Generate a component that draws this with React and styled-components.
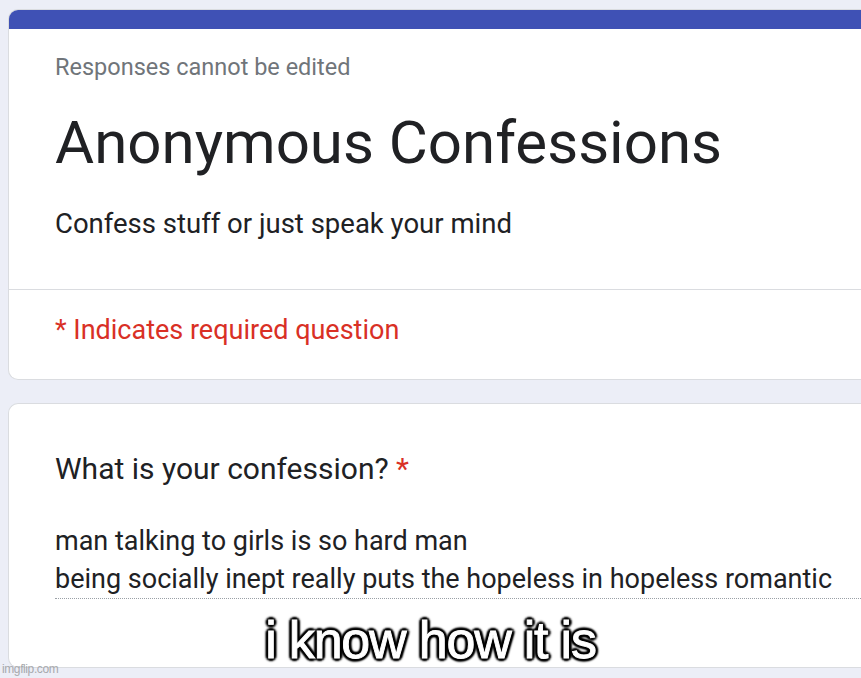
import styled, { createGlobalStyle } from "styled-components";

const Global = createGlobalStyle`
  html, body {
    margin: 0;
    padding: 0;
    background: #eceef7;
    overflow: hidden;
  }
  body {
    font-family: Roboto, "Liberation Sans", Arial, sans-serif;
  }
`;

const Page = styled.div`
  position: relative;
  width: 861px;
  height: 678px;
  overflow: hidden;
  padding: 9px 0 0 8px;
  box-sizing: border-box;
  display: flex;
  flex-direction: column;
  gap: 23px;
`;

const Card = styled.div`
  width: 880px;
  flex-shrink: 0;
  background: #fff;
  border: 1px solid #dadce0;
  border-right: none;
  border-radius: 10px 0 0 10px;
  box-sizing: border-box;
  overflow: hidden;
  height: ${({ $h }) => $h}px;
  display: flex;
  flex-direction: column;
`;

const TopBar = styled.div`
  height: 19px;
  background: #3f51b5;
  flex-shrink: 0;
`;

const Head = styled.div`
  padding: 24px 46px 0;
  height: 261px;
  flex-shrink: 0;
  box-sizing: border-box;
  border-bottom: 1px solid #dadce0;
`;

const Muted = styled.div`
  font-size: 23.5px;
  color: #70757a;
  line-height: 28px;
`;

const Title = styled.h1`
  margin: 27px 0 0;
  font-size: 60px;
  font-weight: 400;
  color: #202124;
  line-height: 70px;
  white-space: nowrap;
`;

const Desc = styled.div`
  margin-top: 30px;
  font-size: 27.5px;
  color: #202124;
  line-height: 32px;
`;

const Required = styled.div`
  padding: 24px 46px 0;
  font-size: 27px;
  color: #d93025;
  line-height: 32px;
`;

const Body = styled.div`
  padding: 47px 0 0 46px;
  width: 852px;
  box-sizing: border-box;
`;

const Question = styled.div`
  font-size: 30px;
  color: #202124;
  line-height: 36px;
`;

const Star = styled.span`
  color: #d93025;
`;

const Answer = styled.div`
  margin-top: 35px;
  font-size: 27px;
  color: #202124;
  line-height: 38px;
  white-space: nowrap;
  border-bottom: 1px dotted #9aa0a6;
`;

const Caption = styled.div`
  position: absolute;
  left: 0;
  right: 0;
  top: 610px;
  text-align: center;
  font-family: "Liberation Sans", Arial, sans-serif;
  font-size: 52px;
  color: #fff;
  letter-spacing: -1.2px;
  -webkit-text-stroke: 0.9px #fff;
  text-shadow:
    2px 2px 2px #000, -2px -2px 2px #000, 2px -2px 2px #000, -2px 2px 2px #000,
    0 3px 2px #000, 0 -3px 2px #000, 3px 0 2px #000, -3px 0 2px #000;
`;

const Watermark = styled.div`
  position: absolute;
  left: 2px;
  bottom: 2px;
  font-family: "Liberation Sans", Arial, sans-serif;
  font-size: 12px;
  color: #a7a9ad;
  letter-spacing: -0.4px;
`;

export default function App() {
  return (
    <>
      <Global />
      <Page>
        <Card $h={371}>
          <TopBar />
          <Head>
            <Muted>Responses cannot be edited</Muted>
            <Title>Anonymous Confessions</Title>
            <Desc>Confess stuff or just speak your mind</Desc>
          </Head>
          <Required>* Indicates required question</Required>
        </Card>
        <Card $h={265}>
          <Body>
            <Question>
              What is your confession? <Star>*</Star>
            </Question>
            <Answer>
              man talking to girls is so hard man
              <br />
              being socially inept really puts the hopeless in hopeless romantic
            </Answer>
          </Body>
        </Card>
        <Caption>i know how it is</Caption>
        <Watermark>imgflip.com</Watermark>
      </Page>
    </>
  );
}
